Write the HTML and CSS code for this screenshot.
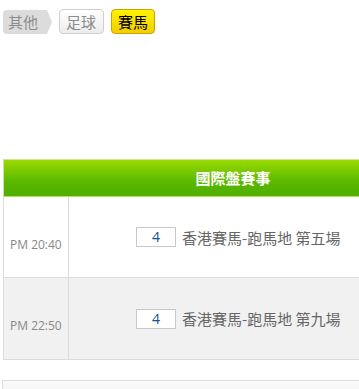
FILE: index.html
```html
<!DOCTYPE html>
<html lang="zh-Hant">
<head>
<meta charset="utf-8">
<link rel="stylesheet" href="styles.css">
</head>
<body>
<div class="page">
  <div class="tabs">
    <span class="tab tab-other">其他</span>
    <span class="tab tab-soccer">足球</span>
    <span class="tab tab-horse">賽馬</span>
  </div>
  <div class="board">
    <div class="board-head">國際盤賽事</div>
    <div class="row">
      <div class="time">PM 20:40</div>
      <div class="race"><span class="num">4</span><span class="name">香港賽馬-跑馬地 第五場</span></div>
    </div>
    <div class="row row-alt">
      <div class="time">PM 22:50</div>
      <div class="race"><span class="num">4</span><span class="name">香港賽馬-跑馬地 第九場</span></div>
    </div>
  </div>
  <div class="footer-box"></div>
</div>
</body>
</html>
```
FILE: styles.css
```css
html, body {
  margin: 0;
  padding: 0;
  overflow: hidden;
  background: #fff;
  font-family: "Open Sans", "Noto Sans CJK TC", sans-serif;
}
.page {
  width: 359px;
  height: 389px;
  overflow: hidden;
}
.tabs {
  display: flex;
  align-items: flex-start;
  padding: 9px 0 0 3px;
  height: 25px;
}
.tab {
  box-sizing: border-box;
  height: 25px;
  font-size: 15px;
  line-height: 23px;
  padding: 0 6px;
  font-family: "Noto Sans CJK TC", sans-serif;
}
.tab-other {
  position: relative;
  margin-top: 1px;
  height: 24px;
  line-height: 23px;
  width: 44px;
  padding: 0 0 0 5px;
  background: #dcdcdc;
  color: #8c8c8c;
  border-radius: 4px 0 0 4px;
}
.tab-other::after {
  content: "";
  position: absolute;
  right: -5px;
  top: 0;
  border-top: 12px solid transparent;
  border-bottom: 12px solid transparent;
  border-left: 5px solid #dcdcdc;
}
.tab-soccer {
  margin-left: 12px;
  width: 45px;
  border: 1px solid #cfcfcf;
  border-radius: 4px;
  color: #8c8c8c;
  background: linear-gradient(#ffffff, #ececec);
}
.tab-horse {
  margin-left: 7px;
  width: 44px;
  border: 1px solid #c9a300;
  border-radius: 4px;
  color: #000;
  background: linear-gradient(#fff200, #f2cf00);
}
.board {
  margin: 125px 0 0 3px;
  width: 460px;
}
.board-head {
  height: 36px;
  border: 1px solid #c8e59a;
  border-bottom-color: #b6e35a;
  background: linear-gradient(#9bdb00, #5ab800 60%, #4fae00);
  color: #fff;
  font-weight: bold;
  font-size: 15px;
  line-height: 36px;
  text-align: center;
  font-family: "Noto Sans CJK TC", sans-serif;
}
.row {
  display: flex;
  height: 80px;
  border-left: 1px solid #dcdcdc;
  border-bottom: 1px solid #dcdcdc;
  background: #fff;
}
.row-alt {
  background: #f1f1f1;
  height: 81px;
}
.time {
  width: 65px;
  border-right: 1px solid #dcdcdc;
  box-sizing: border-box;
  font-size: 12px;
  color: #888;
  padding: 39px 0 0 6px;
}
.race {
  display: flex;
  align-items: center;
  padding-left: 67px;
}
.num {
  box-sizing: border-box;
  width: 40px;
  height: 20px;
  border: 1px solid #c8c8c8;
  background: #fff;
  color: #1b4f8a;
  font-size: 14px;
  line-height: 18px;
  text-align: center;
}
.name {
  margin-left: 6px;
  font-size: 15px;
  color: #666;
  font-family: "Noto Sans CJK TC", sans-serif;
}
.footer-box {
  margin: 20px 0 0 2px;
  height: 20px;
  width: 460px;
  border: 1px solid #dedede;
  background: linear-gradient(#fafafa, #f0f0f0);
}
```
